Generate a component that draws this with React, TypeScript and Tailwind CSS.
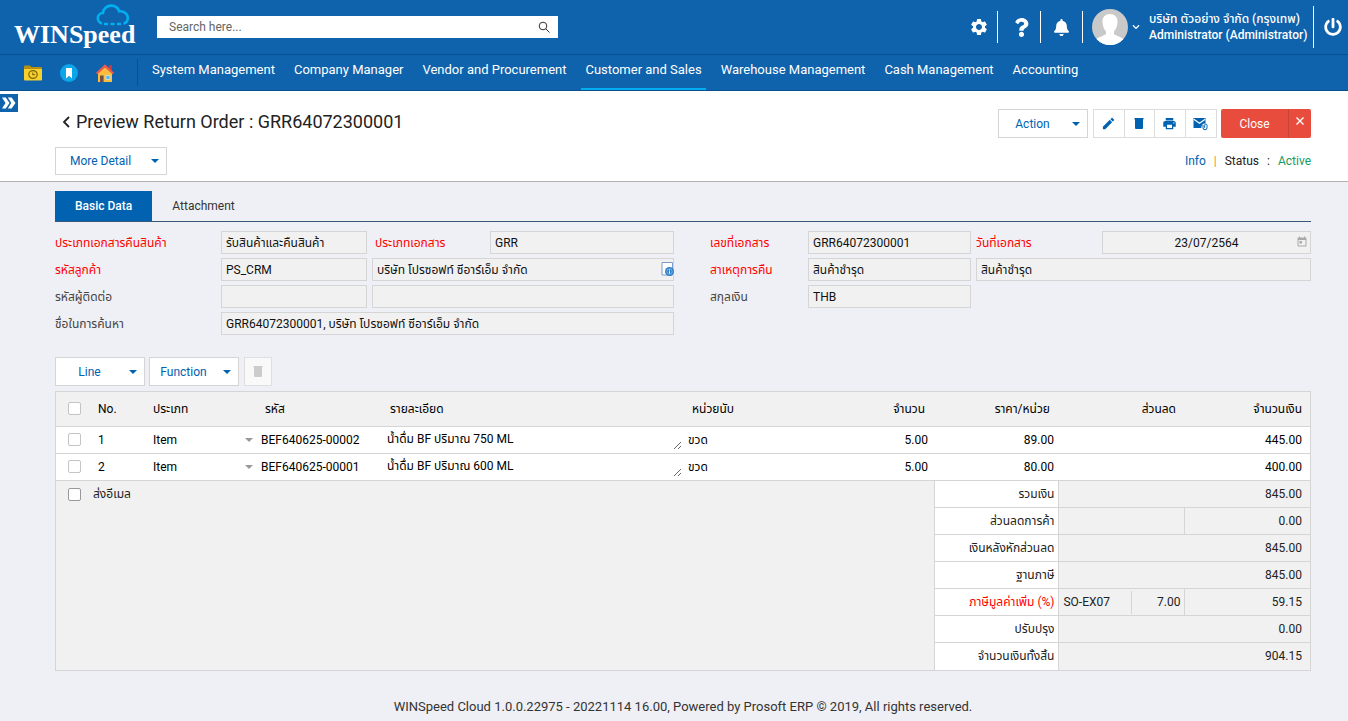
import { useState } from "react";
import clsx from "clsx";
import { FaBell, FaChevronDown, FaPowerOff, FaQuestion } from "react-icons/fa";
import { MdEdit, MdPrint, MdSettings, MdToday } from "react-icons/md";

const MENUS = [
  "System Management",
  "Company Manager",
  "Vendor and Procurement",
  "Customer and Sales",
  "Warehouse Management",
  "Cash Management",
  "Accounting",
];

const LINES = [
  {
    no: 1,
    code: "BEF640625-00002",
    detail: "น้ำดื่ม BF ปริมาณ 750 ML",
    unit: "ขวด",
    qty: "5.00",
    price: "89.00",
    amount: "445.00",
  },
  {
    no: 2,
    code: "BEF640625-00001",
    detail: "น้ำดื่ม BF ปริมาณ 600 ML",
    unit: "ขวด",
    qty: "5.00",
    price: "80.00",
    amount: "400.00",
  },
];

type Total = {
  label: string;
  value: string;
  required?: boolean;
  split?: boolean;
  code?: string;
  rate?: string;
};

const TOTALS: Total[] = [
  { label: "รวมเงิน", value: "845.00" },
  { label: "ส่วนลดการค้า", value: "0.00", split: true },
  { label: "เงินหลังหักส่วนลด", value: "845.00" },
  { label: "ฐานภาษี", value: "845.00" },
  {
    label: "ภาษีมูลค่าเพิ่ม (%)",
    value: "59.15",
    required: true,
    split: true,
    code: "SO-EX07",
    rate: "7.00",
  },
  { label: "ปรับปรุง", value: "0.00" },
  { label: "จำนวนเงินทั้งสิ้น", value: "904.15" },
];

function Logo() {
  return (
    <a
      href="#"
      className="relative ml-3.5 w-[122px] pt-4 font-['Liberation_Serif',serif] text-[26px] leading-[42px] font-bold text-white"
    >
      WINSpeed
      <svg
        viewBox="0 0 34 22"
        className="absolute top-1.5 right-1.5 h-[22px] w-[34px]"
        fill="none"
        stroke="#00b0f0"
        strokeWidth="2.6"
      >
        <path d="M6 19.5C3.500 18.700 1.800 16.700 1.800 14.200 1.800 11.300 4 9.200 7 9 7.200 4.800 10.800 1.600 15.200 1.600c3.800 0 6.900 2.300 8 5.700 4.800-.4 8.600 2.500 8.600 6.700 0 2.700-1.700 4.900-4.300 5.600" />
        <path d="M8 20h4M14.500 20h4M21 20h4" strokeWidth="2.400" />
      </svg>
    </a>
  );
}

function FolderIcon() {
  return (
    <svg viewBox="0 0 18 16" className="h-4 w-[18px]">
      <path d="M0 1.500Q0 .5 1 .5h5l1.500 1.500H17q1 0 1 1V5H0z" fill="#b58f10" />
      <path d="M0 4h18v10.500q0 1-1 1H1q-1 0-1-1z" fill="#f7d02c" />
      <ellipse cx="9" cy="9.500" rx="4.200" ry="3.800" fill="none" stroke="#7d640e" strokeWidth="1.200" />
      <path d="M8.800 7.500v2.200h2.400" fill="none" stroke="#7d640e" strokeWidth="1.100" />
    </svg>
  );
}

function BookmarkIcon() {
  return (
    <svg viewBox="0 0 18 18" className="size-[18px]">
      <circle cx="9" cy="9" r="9" fill="#0ba5e9" />
      <path d="M6 4h6v10.500L9 11.800 6 14.500z" fill="#fff" />
    </svg>
  );
}

function HomeIcon() {
  return (
    <svg viewBox="0 0 18 18" className="size-[18px]">
      <path d="M13 1h3v6h-3z" fill="#c93a32" />
      <path d="M2 9 9 3l7 6v9H2z" fill="#fbbd3d" />
      <path d="M9 .3 0 8.800l1.400 1.500L9 3.400l7.600 6.900L18 8.800z" fill="#f0584a" />
      <path d="M4 11.500h3.600V18H4z" fill="#6f5148" />
      <path d="M10 11.500h4v4h-4z" fill="#4fb8ee" stroke="#dff3fd" strokeWidth=".6" />
    </svg>
  );
}

function TrashIcon({ className }: { className?: string }) {
  return (
    <svg viewBox="0 0 10 11" className={clsx("h-[11px] w-2.5", className)} fill="currentColor">
      <path d="M.5 0h9v1.500H9V10q0 1-1 1H2q-1 0-1-1V1.500H.5z" />
    </svg>
  );
}

function MailAttachIcon() {
  return (
    <svg viewBox="0 0 15 14" className="h-3.5 w-[15px]">
      <path d="M.5 1h12v5.500q-4-.5-4.200 4.500H.5z" fill="currentColor" />
      <path d="m.8 2.200 5.700 4 5.700-4" fill="none" stroke="#fff" strokeWidth="1.200" />
      <path
        d="M10 8v2.800a2 2 0 0 0 4 0V8.300a1.200 1.200 0 0 0-2.400 0v2.500"
        fill="none"
        stroke="currentColor"
        strokeWidth="1"
      />
    </svg>
  );
}

function Caret({ className }: { className?: string }) {
  return (
    <svg viewBox="0 0 8 4" className={clsx("h-1 w-2", className)} fill="currentColor">
      <path d="M0 0h8L4 4z" />
    </svg>
  );
}

function MenuButton({ label, className }: { label: string; className: string }) {
  return (
    <button
      type="button"
      className={clsx(
        "flex items-center border border-[#d5d5d5] bg-white pr-[7px] text-[#0062b1]",
        className,
      )}
    >
      <span className="flex-1 text-center">{label}</span>
      <Caret className="ml-1.5" />
    </button>
  );
}

function Label({
  htmlFor,
  children,
  required,
  className,
}: {
  htmlFor: string;
  children: string;
  required?: boolean;
  className?: string;
}) {
  return (
    <label
      htmlFor={htmlFor}
      className={clsx("shrink-0", required ? "text-[#ff0000]" : "text-[#444]", className)}
    >
      {children}
    </label>
  );
}

function Field({
  id,
  value = "",
  label,
  className,
}: {
  id: string;
  value?: string;
  label?: string;
  className?: string;
}) {
  return (
    <input
      id={id}
      type="text"
      readOnly
      aria-label={label}
      value={value}
      className={clsx("h-[23px] min-w-0 border border-[#d5d5d5] bg-[#f1f1f1] px-1 text-[#111]", className)}
    />
  );
}

function Checkbox({ label, className }: { label: string; className?: string }) {
  return (
    <input
      type="checkbox"
      aria-label={label}
      className={clsx("block size-[13px] appearance-none rounded-xs border bg-white checked:bg-[#0062b1]", className)}
    />
  );
}

function TopBar() {
  return (
    <header className="bg-[#0f62ac] text-white">
      <div className="flex h-[55px] items-center border-b border-[#0a4f8e]">
        <Logo />
        <form className="ml-[21px] flex h-[22px] w-[401px] items-center bg-white">
          <input
            type="search"
            aria-label="Search"
            placeholder="Search here..."
            className="min-w-0 flex-1 px-3 text-xs text-gray-700 outline-none placeholder:text-[#666]"
          />
          <button type="button" aria-label="Search" className="pr-2 text-[#333]">
            <svg viewBox="0 0 12 12" className="size-3" fill="none" stroke="currentColor">
              <circle cx="5" cy="5" r="3.800" />
              <path d="m8 8 3.500 3.500" />
            </svg>
          </button>
        </form>
        <div className="ml-auto flex items-center">
          <button type="button" aria-label="Settings" className="mr-2">
            <MdSettings size={20} />
          </button>
          <span className="h-8 w-px bg-white" />
          <button type="button" aria-label="Help" className="flex w-[42px] justify-center pl-1">
            <FaQuestion size={19} />
          </button>
          <span className="h-8 w-px bg-white" />
          <button type="button" aria-label="Notifications" className="flex w-[41px] justify-center">
            <FaBell size={17} />
          </button>
          <span className="h-8 w-px bg-white" />
          <button type="button" aria-label="Account" className="ml-[9px] flex items-center gap-1">
            <svg viewBox="0 0 36 36" className="size-9">
              <circle cx="18" cy="18" r="18" fill="#c9c9c9" />
              <path
                d="M18 5c5 0 8 3.500 7.500 8.500-.3 4-1.500 7-3.500 9v2c0 2 6 2.500 9.500 5.500a18 18 0 0 1-27 0c3.500-3 9.500-3.500 9.500-5.500v-2c-2-2-3.200-5-3.500-9C10 8.500 13 5 18 5"
                fill="#fff"
              />
            </svg>
            <FaChevronDown size={8} />
          </button>
          <div className="ml-[9px] w-[155px] text-xs leading-4 font-medium whitespace-nowrap">
            <p>บริษัท ตัวอย่าง จำกัด (กรุงเทพ)</p>
            <p>Administrator (Administrator)</p>
          </div>
          <span className="ml-[9px] h-[42px] w-px bg-white" />
          <button type="button" aria-label="Log out" className="mr-1.5 ml-2.5">
            <FaPowerOff size={18} />
          </button>
        </div>
      </div>
      <nav className="flex h-9 items-stretch border-b border-[#0a4f8e]">
        <div className="my-1 flex items-center gap-[18px] border-r border-[#0a4f8e] pr-[23px] pl-6">
          <a href="#" aria-label="Recent">
            <FolderIcon />
          </a>
          <a href="#" aria-label="Bookmarks">
            <BookmarkIcon />
          </a>
          <a href="#" aria-label="Home">
            <HomeIcon />
          </a>
        </div>
        <ul className="ml-2.5 flex gap-[11px] text-[13px] whitespace-nowrap">
          {MENUS.map((menu) => (
            <li key={menu} className="flex">
              <a
                href="#"
                className={clsx(
                  "border-b-2 px-1 pt-1.5",
                  menu === "Customer and Sales" ? "border-[#00aeef]" : "border-transparent",
                )}
              >
                {menu}
              </a>
            </li>
          ))}
        </ul>
      </nav>
    </header>
  );
}

function PageHead() {
  const iconButton = "flex w-[31px] items-center justify-center border-r border-[#dcdcdc] last:border-r-0";

  return (
    <section className="relative border-b border-[#b0b0b4] bg-white pt-[18px] pr-[37px] pb-1.5 pl-[55px]">
      <button
        type="button"
        aria-label="Open side menu"
        className="absolute top-[3px] left-0 flex h-[18px] w-[18px] items-center justify-center bg-[#0f62ac] text-white"
      >
        <svg viewBox="0 0 14 12" className="h-3 w-3.5" fill="currentColor">
          <path d="M0 .5h3.800L7.500 6l-3.700 5.500H0L3.500 6zM5.800.5h3.800L13.500 6l-3.900 5.500H5.800L9.300 6z" />
        </svg>
      </button>
      <div className="flex h-[29px] justify-between">
        <h1 className="flex items-center pb-1 pl-[7px] text-lg text-[#222]">
          <a href="#" aria-label="Back" className="mr-1.5">
            <svg viewBox="0 0 8 12" className="h-3 w-2" fill="none" stroke="currentColor" strokeWidth="1.800">
              <path d="M7 1 2 6l5 5" />
            </svg>
          </a>
          Preview Return Order : GRR64072300001
        </h1>
        <div className="flex text-[#0062b1]">
          <MenuButton label="Action" className="w-[90px]" />
          <div className="ml-[5px] flex w-[124px] border border-[#dcdcdc]">
            <button type="button" aria-label="Edit" className={iconButton}>
              <MdEdit size={15} />
            </button>
            <button type="button" aria-label="Delete" className={iconButton}>
              <TrashIcon />
            </button>
            <button type="button" aria-label="Print" className={iconButton}>
              <MdPrint size={15} />
            </button>
            <button type="button" aria-label="Send mail" className={iconButton}>
              <MailAttachIcon />
            </button>
          </div>
          <div className="ml-1 flex rounded-xs bg-[#e84c3d] text-white">
            <button type="button" className="w-[68px] border-r border-[#c9453a]">
              Close
            </button>
            <button type="button" aria-label="Close page" className="flex w-[22px] justify-center pt-2">
              <svg viewBox="0 0 8 8" className="size-2" fill="none" stroke="currentColor" strokeWidth="1.400">
                <path d="m.5.5 7 7m0-7-7 7" />
              </svg>
            </button>
          </div>
        </div>
      </div>
      <div className="mt-[9px] flex items-center justify-between">
        <MenuButton label="More Detail" className="h-7 w-28" />
        <p className="flex text-[#222]">
          <a href="#" className="text-[#0062b1]">
            Info
          </a>
          <span className="mx-2 text-[#e0902c]">|</span>
          Status
          <span className="mx-2">:</span>
          <span className="text-[#1a9a5c]">Active</span>
        </p>
      </div>
    </section>
  );
}

function Tabs() {
  const [active, setActive] = useState("Basic Data");

  return (
    <div role="tablist" className="flex h-[31px] border-b border-[#3a5678]">
      {["Basic Data", "Attachment"].map((tab) => (
        <button
          key={tab}
          type="button"
          role="tab"
          aria-selected={active === tab}
          onClick={() => setActive(tab)}
          className={clsx(
            "px-5",
            active === tab ? "bg-[#0062b1] font-medium text-white" : "text-[#333]",
          )}
        >
          {tab}
        </button>
      ))}
    </div>
  );
}

function DocumentForm() {
  return (
    <form className="mt-[9px] grid grid-cols-[619fr_601fr] gap-9">
      <div className="flex min-w-0 flex-col gap-1">
        <div className="flex items-center">
          <Label htmlFor="return-type" required className="w-[166px]">
            ประเภทเอกสารคืนสินค้า
          </Label>
          <Field id="return-type" value="รับสินค้าและคืนสินค้า" className="w-[146px]" />
          <Label htmlFor="doc-type" required className="ml-2 w-[115px]">
            ประเภทเอกสาร
          </Label>
          <Field id="doc-type" value="GRR" className="flex-1" />
        </div>
        <div className="flex items-center">
          <Label htmlFor="customer" required className="w-[166px]">
            รหัสลูกค้า
          </Label>
          <Field id="customer" value="PS_CRM" className="w-[146px]" />
          <div className="relative ml-[5px] flex flex-1">
            <Field
              id="customer-name"
              label="ชื่อลูกค้า"
              value="บริษัท โปรซอฟท์ ซีอาร์เอ็ม จำกัด"
              className="flex-1"
            />
            <button type="button" aria-label="Customer info" className="absolute top-1 right-0">
              <svg viewBox="0 0 13 14" className="h-3.5 w-[13px]">
                <path d="M1 .5h10.500v12.500H1z" fill="#fff" stroke="#7f9cc9" />
                <circle cx="8.500" cy="9.500" r="4.500" fill="#2f7fc8" />
                <circle cx="8.500" cy="9.500" r="2.700" fill="none" stroke="#8cc0ee" strokeWidth=".8" />
                <path d="M8.500 7.500v1M8.500 9.200v2.300" stroke="#fff" strokeWidth="1" />
              </svg>
            </button>
          </div>
        </div>
        <div className="flex items-center">
          <Label htmlFor="contact" className="w-[166px]">
            รหัสผู้ติดต่อ
          </Label>
          <Field id="contact" className="w-[146px]" />
          <Field id="contact-name" label="ชื่อผู้ติดต่อ" className="ml-[5px] flex-1" />
        </div>
        <div className="flex items-center">
          <Label htmlFor="search-name" className="w-[166px]">
            ชื่อในการค้นหา
          </Label>
          <Field
            id="search-name"
            value="GRR64072300001, บริษัท โปรซอฟท์ ซีอาร์เอ็ม จำกัด"
            className="flex-1"
          />
        </div>
      </div>
      <div className="flex min-w-0 flex-col gap-1">
        <div className="flex items-center">
          <Label htmlFor="doc-no" required className="w-[98px]">
            เลขที่เอกสาร
          </Label>
          <Field id="doc-no" value="GRR64072300001" className="w-[163px]" />
          <Label htmlFor="doc-date" required className="ml-[5px] w-[126px]">
            วันที่เอกสาร
          </Label>
          <div className="relative flex flex-1">
            <Field id="doc-date" value="23/07/2564" className="flex-1 text-center" />
            <MdToday size={12} className="absolute top-[5px] right-[3px] text-[#aaa]" />
          </div>
        </div>
        <div className="flex items-center">
          <Label htmlFor="reason" required className="w-[98px]">
            สาเหตุการคืน
          </Label>
          <Field id="reason" value="สินค้าชำรุด" className="w-[163px]" />
          <Field id="reason-name" label="รายละเอียดสาเหตุ" value="สินค้าชำรุด" className="ml-[5px] flex-1" />
        </div>
        <div className="flex items-center">
          <Label htmlFor="currency" className="w-[98px]">
            สกุลเงิน
          </Label>
          <Field id="currency" value="THB" className="w-[163px]" />
        </div>
      </div>
    </form>
  );
}

function LineTable() {
  return (
    <table className="w-full table-fixed text-left text-black">
      <colgroup>
        <col className="w-[37px]" />
        <col className="w-[55px]" />
        <col className="w-[109px]" />
        <col className="w-[126px]" />
        <col />
        <col className="w-[124px]" />
        <col className="w-[125px]" />
        <col className="w-[125px]" />
        <col className="w-[126px]" />
        <col className="w-[126px]" />
      </colgroup>
      <thead>
        <tr className="h-[34px] border-b border-[#d5d5d5] [&>th]:font-normal">
          <th className="pl-3">
            <Checkbox label="Select all" className="border-[#c4c4c4]" />
          </th>
          <th className="pl-[5px]">No.</th>
          <th className="pl-[5px]">ประเภท</th>
          <th className="pl-2">รหัส</th>
          <th className="pl-[7px]">รายละเอียด</th>
          <th className="pl-2">หน่วยนับ</th>
          <th className="pr-2 text-right">จำนวน</th>
          <th className="pr-2 text-right">ราคา/หน่วย</th>
          <th className="pr-2 text-right">ส่วนลด</th>
          <th className="pr-2 text-right">จำนวนเงิน</th>
        </tr>
      </thead>
      <tbody>
        {LINES.map((line) => (
          <tr key={line.no} className="h-[27px] border-b border-[#d5d5d5] bg-white">
            <td className="pl-3">
              <Checkbox label={`Select line ${line.no}`} className="border-[#c4c4c4]" />
            </td>
            <td className="pl-[5px]">{line.no}</td>
            <td>
              <div className="flex items-center pr-1 pl-[5px]">
                <select aria-label={`Type of line ${line.no}`} className="min-w-0 flex-1 appearance-none">
                  <option>Item</option>
                </select>
                <Caret className="text-[#999]" />
              </div>
            </td>
            <td className="pl-1">{line.code}</td>
            <td className="pr-0.5 pl-1">
              <textarea
                aria-label={`Detail of line ${line.no}`}
                readOnly
                rows={1}
                defaultValue={line.detail}
                className="block h-5 w-full resize overflow-hidden leading-[18px]"
              />
            </td>
            <td className="pl-1">{line.unit}</td>
            <td className="pr-[5px] text-right">{line.qty}</td>
            <td className="pr-1 text-right">{line.price}</td>
            <td />
            <td className="pr-2 text-right">{line.amount}</td>
          </tr>
        ))}
      </tbody>
    </table>
  );
}

function TotalsTable() {
  return (
    <table className="w-[375px] table-fixed border-l border-[#d5d5d5] text-right text-[#222]">
      <colgroup>
        <col className="w-[124px]" />
        <col className="w-[126px]" />
        <col className="w-[125px]" />
      </colgroup>
      <tbody>
        {TOTALS.map((total) => (
          <tr key={total.label} className="h-[27px] border-b border-[#d5d5d5] last:border-b-0">
            <th
              scope="row"
              className={clsx(
                "border-r border-[#d5d5d5] bg-white pr-1 font-normal whitespace-nowrap",
                total.required && "text-[#ff0000]",
              )}
            >
              {total.label}
            </th>
            {total.split && (
              <td className="border-r border-[#d5d5d5]">
                {total.code && (
                  <div className="flex items-center">
                    <span className="flex-1 border-r border-[#d5d5d5] pl-1 text-left leading-[23px]">
                      {total.code}
                    </span>
                    <span className="w-[52px] pr-1">{total.rate}</span>
                  </div>
                )}
              </td>
            )}
            <td colSpan={total.split ? 1 : 2} className="pr-2">
              {total.value}
            </td>
          </tr>
        ))}
      </tbody>
    </table>
  );
}

export default function App() {
  return (
    <div className="min-h-screen bg-[#eff0f5] font-[Roboto,'Noto_Sans_Thai',sans-serif] text-xs">
      <TopBar />
      <PageHead />
      <main className="pt-[9px] pr-[37px] pl-[55px]">
        <Tabs />
        <DocumentForm />
        <div className="mt-[22px] flex h-[29px]">
          <MenuButton label="Line" className="w-[90px]" />
          <MenuButton label="Function" className="ml-1 w-[90px]" />
          <button
            type="button"
            disabled
            aria-label="Delete line"
            className="ml-[5px] flex w-7 items-center justify-center border border-[#dfdfdf] bg-[#f9f9f9] text-[#ccc]"
          >
            <TrashIcon />
          </button>
        </div>
        <div className="mt-[5px] border border-[#d5d5d5] bg-[#f1f1f1]">
          <LineTable />
          <div className="flex justify-between">
            <label className="flex h-[27px] items-center gap-3 pl-3 text-[#222]">
              <Checkbox label="ส่งอีเมล" className="border-[#999]" />
              ส่งอีเมล
            </label>
            <TotalsTable />
          </div>
        </div>
      </main>
      <footer className="mt-[27px] pl-[18px] text-center text-[13px] text-[#333]">
        WINSpeed Cloud 1.0.0.22975 - 20221114 16.00, Powered by Prosoft ERP © 2019, All rights reserved.
      </footer>
    </div>
  );
}
